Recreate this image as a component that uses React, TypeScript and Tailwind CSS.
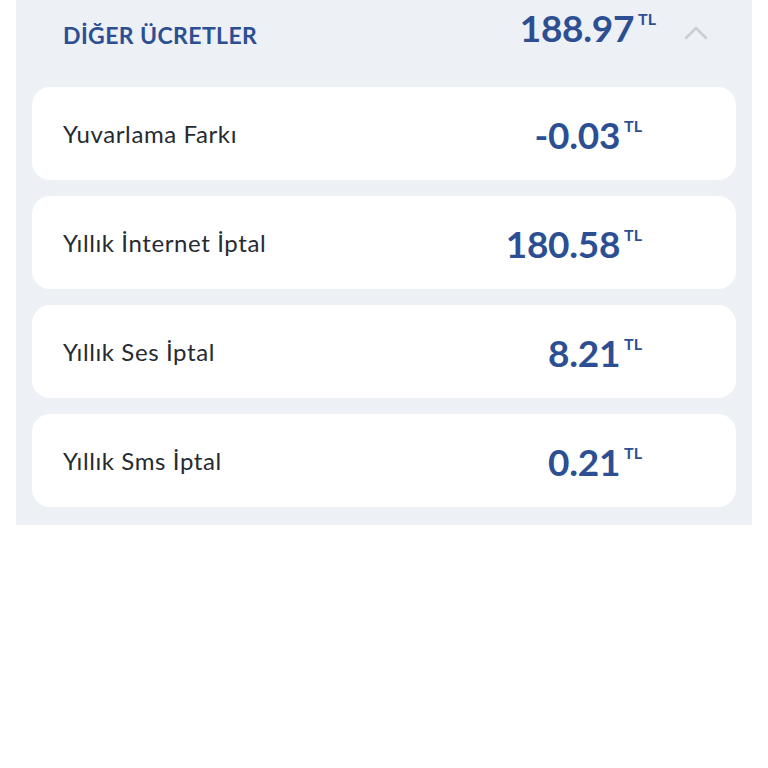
const items = [
  { label: "Yuvarlama Farkı", amount: "-0.03" },
  { label: "Yıllık İnternet İptal", amount: "180.58" },
  { label: "Yıllık Ses İptal", amount: "8.21" },
  { label: "Yıllık Sms İptal", amount: "0.21" },
];

function Amount({ value }: { value: string }) {
  return (
    <div className="flex items-start text-[#2c4f93]">
      <span className="text-[37px] font-bold leading-none tracking-[-0.3px]">{value}</span>
      <span className="ml-[4px] mt-[2px] text-[16px] font-bold leading-none">TL</span>
    </div>
  );
}

export default function App() {
  return (
    <div className="min-h-[768px] bg-white px-4 font-['Lato','Noto_Sans',sans-serif]">
      <div className="bg-[#edf0f4] px-4 pb-[18px]">
        <div className="flex h-[71px] items-center pl-[31px] pr-[28px]">
          <h2 className="flex-1 text-[23px] font-bold tracking-[0.4px] text-[#2c4f93]">
            DİĞER ÜCRETLER
          </h2>
          <div className="mb-[16px]">
            <Amount value="188.97" />
          </div>
          <svg
            className="ml-[28px] mb-[6px]"
            width="24"
            height="14"
            viewBox="0 0 24 14"
            fill="none"
            stroke="#c9cdd4"
            strokeWidth="2.5"
            strokeLinecap="round"
            strokeLinejoin="round"
          >
            <path d="M2 12 L12 2 L22 12" />
          </svg>
        </div>
        <div className="flex flex-col gap-4 mt-4">
          {items.map((item) => (
            <div
              key={item.label}
              className="flex h-[93px] items-center justify-between rounded-[18px] bg-white pl-[31px] pr-[94px]"
            >
              <span className="text-[24px] tracking-[0.6px] text-[#262a31]">{item.label}</span>
              <div className="mt-[2px]">
                <Amount value={item.amount} />
              </div>
            </div>
          ))}
        </div>
      </div>
    </div>
  );
}
